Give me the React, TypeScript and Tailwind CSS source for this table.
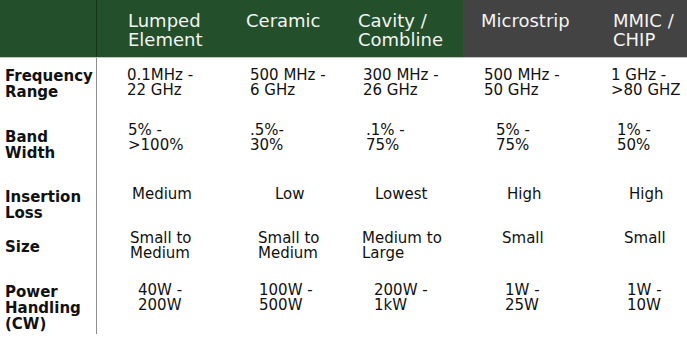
const font = { fontFamily: '"DejaVu Sans", Verdana, sans-serif' };

interface Header {
  label: string[];
  pad: string;
  dark?: boolean;
}

const headers: Header[] = [
  { label: ['Lumped', 'Element'], pad: 'pl-[31px]' },
  { label: ['Ceramic'], pad: 'pl-[21px]' },
  { label: ['Cavity /', 'Combline'], pad: 'pl-[13px]' },
  { label: ['Microstrip'], pad: 'pl-[18px]', dark: true },
  { label: ['MMIC /', 'CHIP'], pad: 'pl-[23px]', dark: true },
];

interface Cell {
  lines: string[];
  pad: string;
}

interface Row {
  label: string[];
  height: string;
  labelPad: string;
  valuePad: string;
  cells: Cell[];
}

const rows: Row[] = [
  {
    label: ['Frequency', 'Range'],
    height: 'h-[59px]',
    labelPad: 'pt-[10px]',
    valuePad: 'pt-[10px]',
    cells: [
      { lines: ['0.1MHz -', '22 GHz'], pad: 'pl-[30px]' },
      { lines: ['500 MHz -', '6 GHz'], pad: 'pl-[25px]' },
      { lines: ['300 MHz -', '26 GHz'], pad: 'pl-[18px]' },
      { lines: ['500 MHz -', '50 GHz'], pad: 'pl-[21px]' },
      { lines: ['1 GHz -', '>80 GHZ'], pad: 'pl-[21px]' },
    ],
  },
  {
    label: ['Band', 'Width'],
    height: 'h-[60px]',
    labelPad: 'pt-[12px]',
    valuePad: 'pt-[6px]',
    cells: [
      { lines: ['5% -', '>100%'], pad: 'pl-[31px]' },
      { lines: ['.5%-', '30%'], pad: 'pl-[25px]' },
      { lines: ['.1% -', '75%'], pad: 'pl-[21px]' },
      { lines: ['5% -', '75%'], pad: 'pl-[33px]' },
      { lines: ['1% -', '50%'], pad: 'pl-[27px]' },
    ],
  },
  {
    label: ['Insertion', 'Loss'],
    height: 'h-[48px]',
    labelPad: 'pt-[12px]',
    valuePad: 'pt-[10px]',
    cells: [
      { lines: ['Medium'], pad: 'pl-[35px]' },
      { lines: ['Low'], pad: 'pl-[50px]' },
      { lines: ['Lowest'], pad: 'pl-[30px]' },
      { lines: ['High'], pad: 'pl-[44px]' },
      { lines: ['High'], pad: 'pl-[39px]' },
    ],
  },
  {
    label: ['Size'],
    height: 'h-[52px]',
    labelPad: 'pt-[14px]',
    valuePad: 'pt-[6px]',
    cells: [
      { lines: ['Small to', 'Medium'], pad: 'pl-[33px]' },
      { lines: ['Small to', 'Medium'], pad: 'pl-[33px]' },
      { lines: ['Medium to', 'Large'], pad: 'pl-[17px]' },
      { lines: ['Small'], pad: 'pl-[39px]' },
      { lines: ['Small'], pad: 'pl-[34px]' },
    ],
  },
  {
    label: ['Power', 'Handling', '(CW)'],
    height: 'h-[57px]',
    labelPad: 'pt-[7px]',
    valuePad: 'pt-[6px]',
    cells: [
      { lines: ['40W -', '200W'], pad: 'pl-[41px]' },
      { lines: ['100W -', '500W'], pad: 'pl-[34px]' },
      { lines: ['200W -', '1kW'], pad: 'pl-[29px]' },
      { lines: ['1W -', '25W'], pad: 'pl-[42px]' },
      { lines: ['1W -', '10W'], pad: 'pl-[37px]' },
    ],
  },
];

const cols = 'grid grid-cols-[97px_128px_120px_118px_127px_97px]';

export default function App() {
  return (
    <div className="h-[342px] w-[687px] overflow-hidden bg-white" style={font}>
      {/* Header */}
      <div className={`${cols} h-[58px] border-b border-[#c4c4c4]`}>
        <div className="border-r border-[#163519] bg-[#23502a]" />
        {headers.map((h) => (
          <div
            key={h.label.join(' ')}
            className={`${h.dark ? 'bg-[#434343]' : 'bg-[#23502a]'} ${h.pad} pt-[11px] text-[18px] leading-[19px] text-[#f4f4f4]`}
          >
            {h.label.map((l) => (
              <div key={l}>{l}</div>
            ))}
          </div>
        ))}
      </div>

      {/* Body */}
      {rows.map((row) => (
        <div key={row.label.join(' ')} className={`${cols} ${row.height}`}>
          <div
            className={`border-r border-[#8e8e8e] pl-[5px] ${row.labelPad} text-[15px] font-bold leading-[16px] text-[#111]`}
          >
            {row.label.map((l) => (
              <div key={l}>{l}</div>
            ))}
          </div>
          {row.cells.map((c, i) => (
            <div
              key={i}
              className={`${c.pad} ${row.valuePad} whitespace-nowrap text-[15px] leading-[15px] text-[#111]`}
            >
              {c.lines.map((l) => (
                <div key={l}>{l}</div>
              ))}
            </div>
          ))}
        </div>
      ))}
    </div>
  );
}
